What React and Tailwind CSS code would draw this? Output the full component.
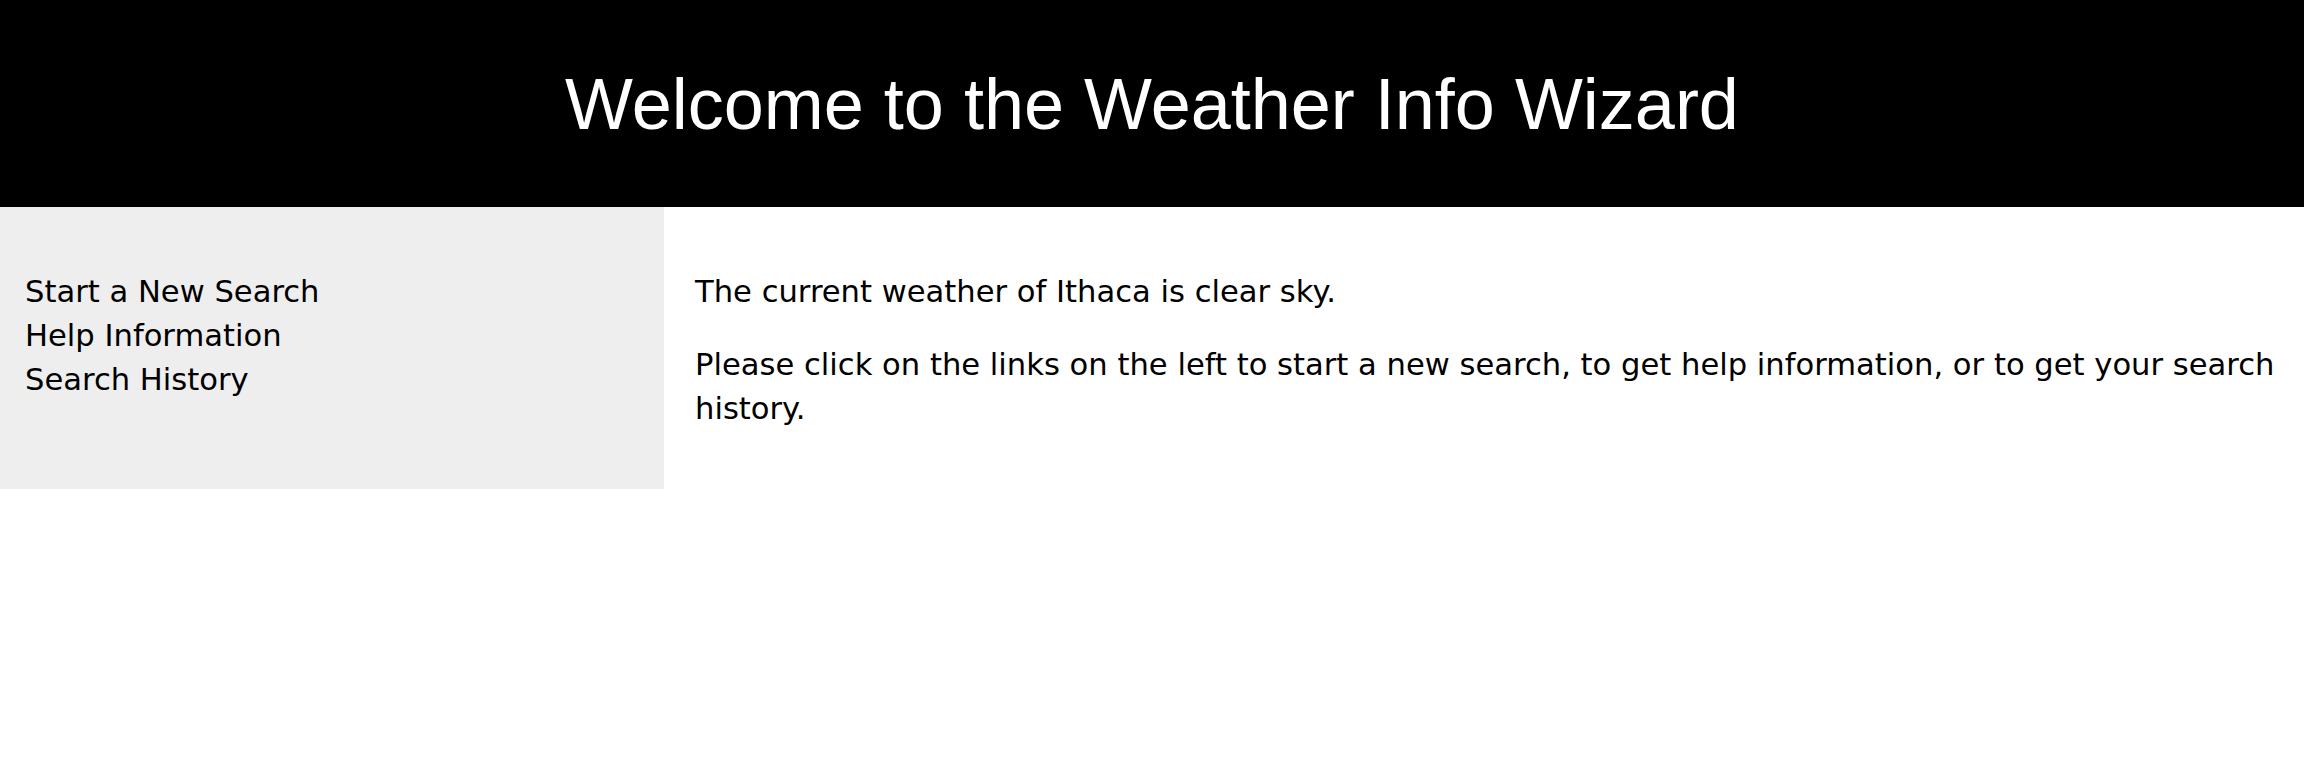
const links = ["Start a New Search", "Help Information", "Search History"];

const App = () => {
  return (
    <div className="min-h-screen bg-white text-black">
      <header className="h-[207px] bg-black flex items-center justify-center">
        <h1 className="text-white text-[72px] leading-none font-['Liberation_Sans',Arial,sans-serif] font-normal">
          Welcome to the Weather Info Wizard
        </h1>
      </header>
      <div className="flex font-['DejaVu_Sans',Verdana,sans-serif] text-[30.6px] leading-[44px]">
        <nav className="w-[664px] shrink-0 bg-[#eeeeee] pl-[25px] pt-[63px]">
          <ul>
            {links.map((l) => (
              <li key={l}>
                <a href="#" className="text-black">{l}</a>
              </li>
            ))}
          </ul>
        </nav>
        <main className="flex-1 pl-[31px] pr-[10px] pt-[34px] pb-[29px]">
          <p className="my-[29px]">The current weather of Ithaca is clear sky.</p>
          <p className="my-[29px]">
            Please click on the links on the left to start a new search, to get help information, or to get your search history.
          </p>
        </main>
      </div>
    </div>
  );
};

export default App;
